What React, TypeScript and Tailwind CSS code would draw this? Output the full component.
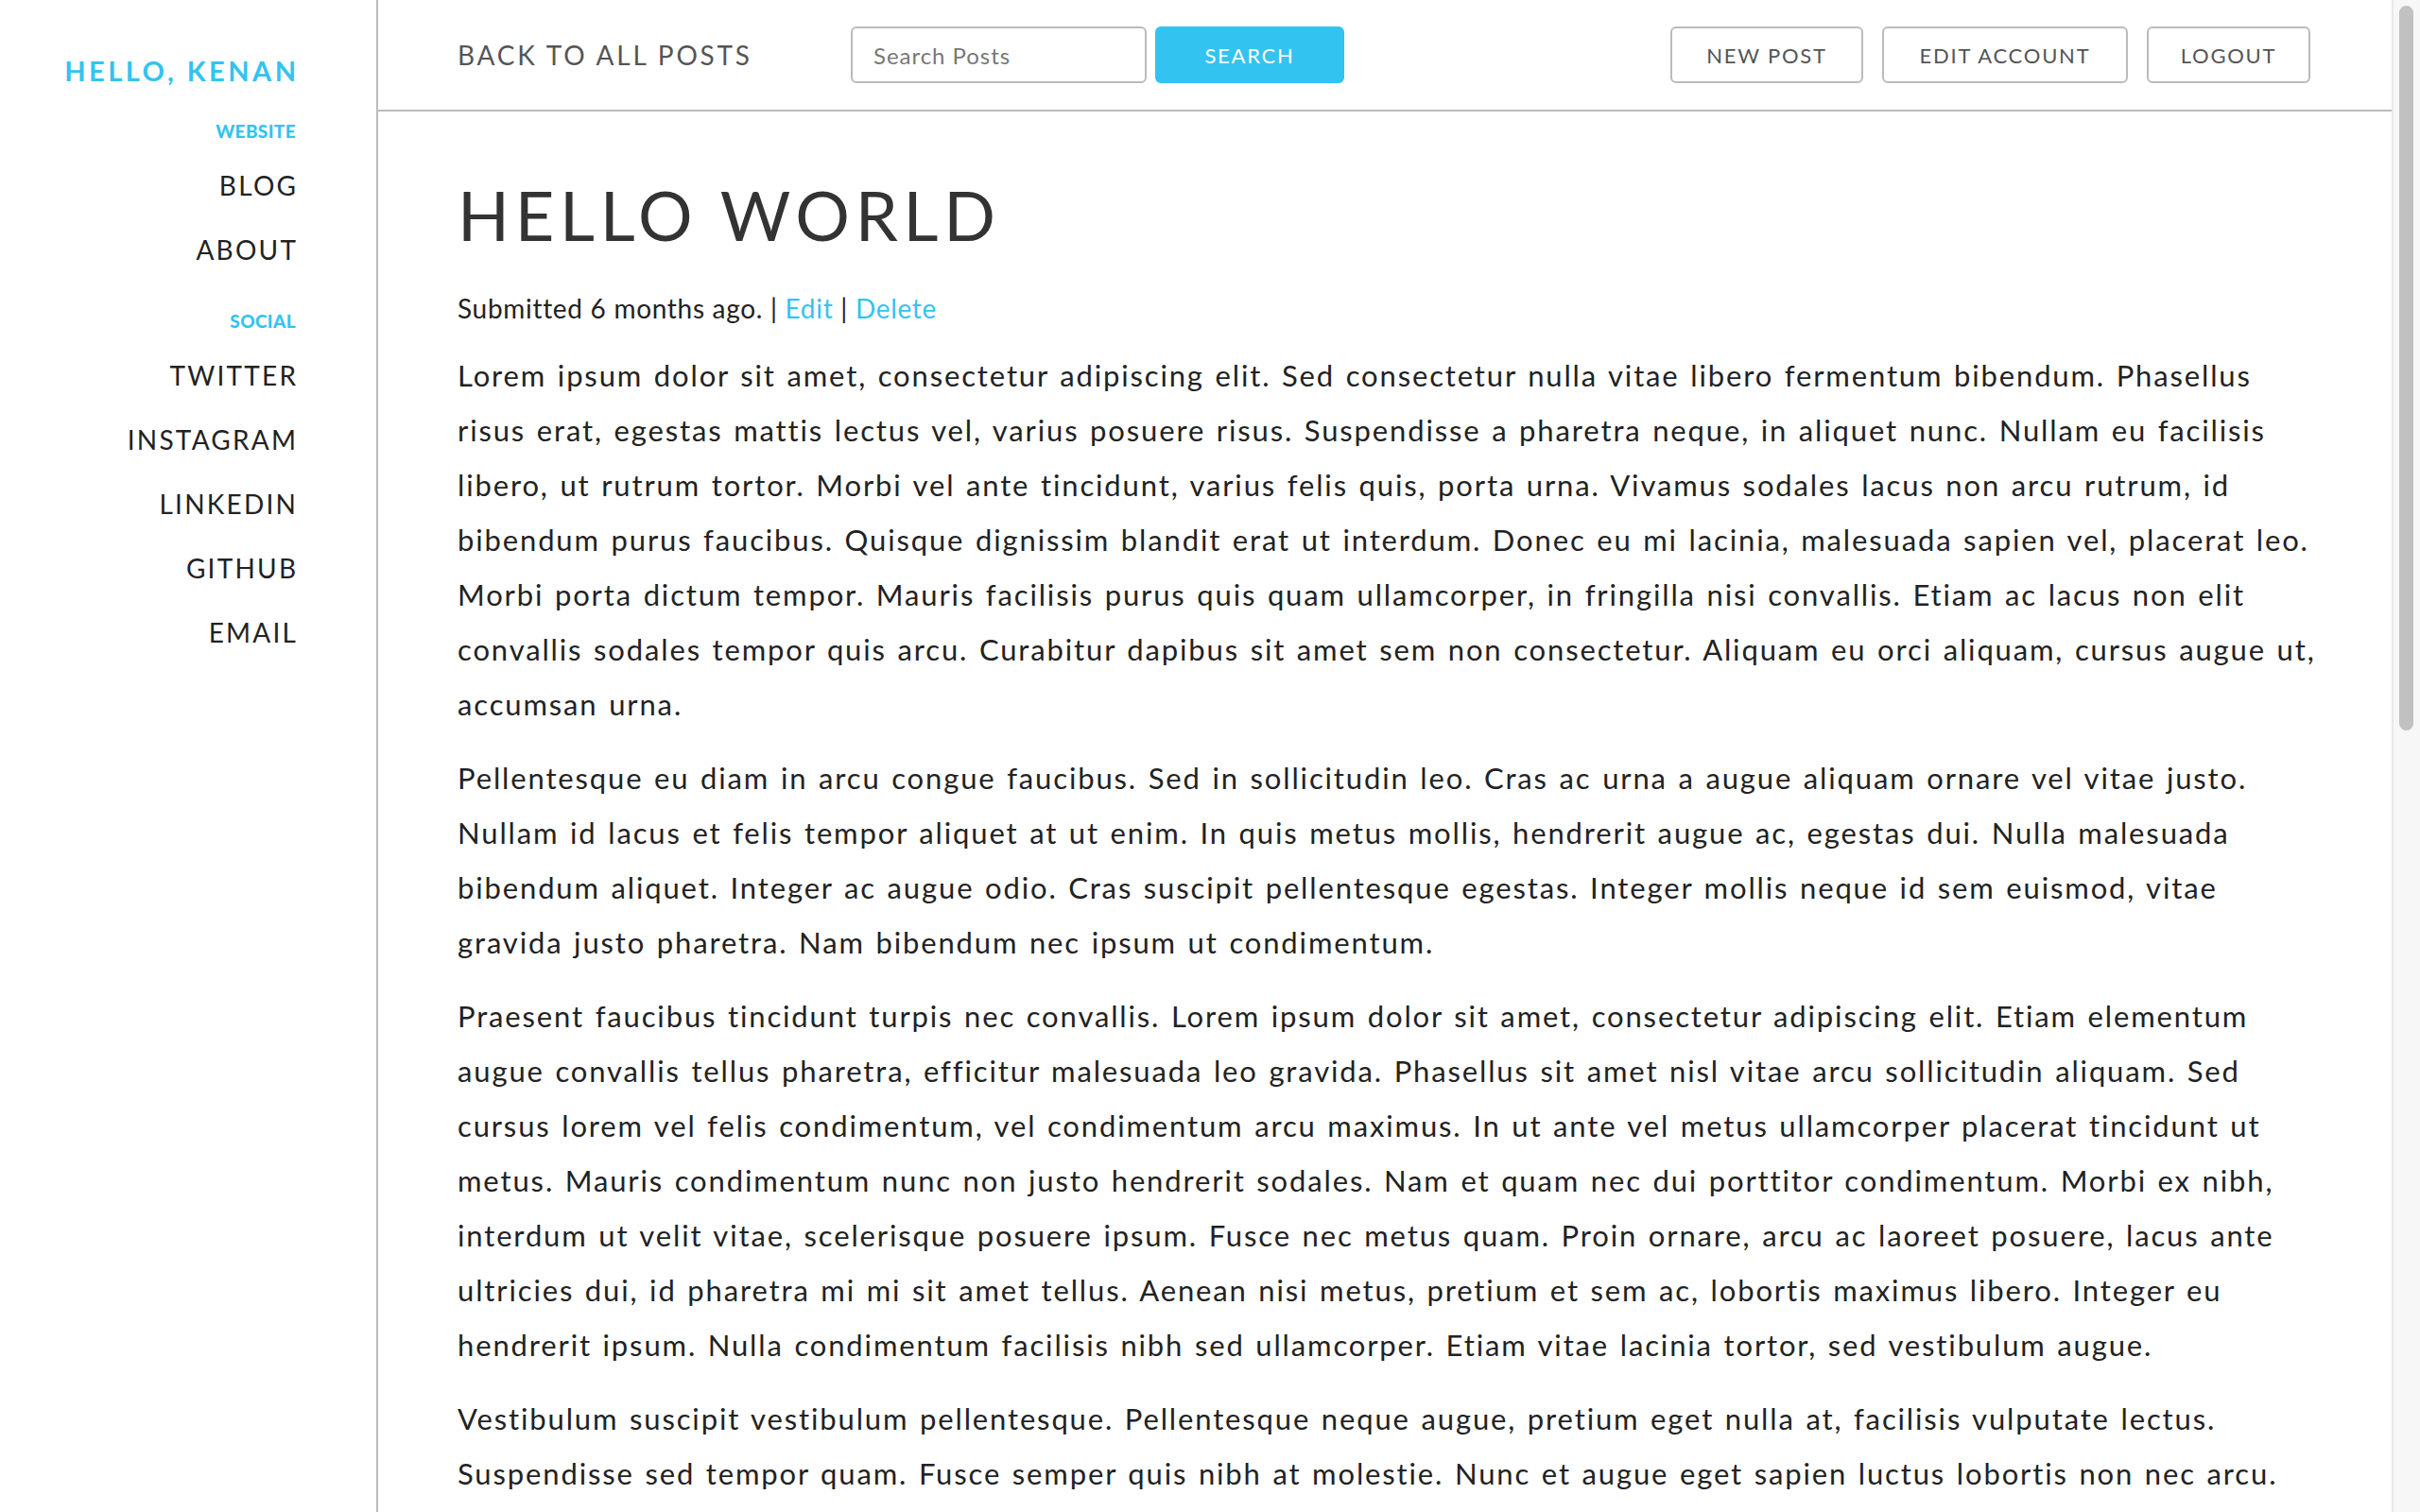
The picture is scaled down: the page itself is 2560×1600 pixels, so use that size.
import React from "react";

const paragraphs: string[][] = [
  [
    "Lorem ipsum dolor sit amet, consectetur adipiscing elit. Sed consectetur nulla vitae libero fermentum bibendum. Phasellus",
    "risus erat, egestas mattis lectus vel, varius posuere risus. Suspendisse a pharetra neque, in aliquet nunc. Nullam eu facilisis",
    "libero, ut rutrum tortor. Morbi vel ante tincidunt, varius felis quis, porta urna. Vivamus sodales lacus non arcu rutrum, id",
    "bibendum purus faucibus. Quisque dignissim blandit erat ut interdum. Donec eu mi lacinia, malesuada sapien vel, placerat leo.",
    "Morbi porta dictum tempor. Mauris facilisis purus quis quam ullamcorper, in fringilla nisi convallis. Etiam ac lacus non elit",
    "convallis sodales tempor quis arcu. Curabitur dapibus sit amet sem non consectetur. Aliquam eu orci aliquam, cursus augue ut,",
    "accumsan urna.",
  ],
  [
    "Pellentesque eu diam in arcu congue faucibus. Sed in sollicitudin leo. Cras ac urna a augue aliquam ornare vel vitae justo.",
    "Nullam id lacus et felis tempor aliquet at ut enim. In quis metus mollis, hendrerit augue ac, egestas dui. Nulla malesuada",
    "bibendum aliquet. Integer ac augue odio. Cras suscipit pellentesque egestas. Integer mollis neque id sem euismod, vitae",
    "gravida justo pharetra. Nam bibendum nec ipsum ut condimentum.",
  ],
  [
    "Praesent faucibus tincidunt turpis nec convallis. Lorem ipsum dolor sit amet, consectetur adipiscing elit. Etiam elementum",
    "augue convallis tellus pharetra, efficitur malesuada leo gravida. Phasellus sit amet nisl vitae arcu sollicitudin aliquam. Sed",
    "cursus lorem vel felis condimentum, vel condimentum arcu maximus. In ut ante vel metus ullamcorper placerat tincidunt ut",
    "metus. Mauris condimentum nunc non justo hendrerit sodales. Nam et quam nec dui porttitor condimentum. Morbi ex nibh,",
    "interdum ut velit vitae, scelerisque posuere ipsum. Fusce nec metus quam. Proin ornare, arcu ac laoreet posuere, lacus ante",
    "ultricies dui, id pharetra mi mi sit amet tellus. Aenean nisi metus, pretium et sem ac, lobortis maximus libero. Integer eu",
    "hendrerit ipsum. Nulla condimentum facilisis nibh sed ullamcorper. Etiam vitae lacinia tortor, sed vestibulum augue.",
  ],
  [
    "Vestibulum suscipit vestibulum pellentesque. Pellentesque neque augue, pretium eget nulla at, facilisis vulputate lectus.",
    "Suspendisse sed tempor quam. Fusce semper quis nibh at molestie. Nunc et augue eget sapien luctus lobortis non nec arcu.",
  ],
];

const websiteLinks = ["BLOG", "ABOUT"];
const socialLinks = ["TWITTER", "INSTAGRAM", "LINKEDIN", "GITHUB", "EMAIL"];

function NavLink({ label }: { label: string }) {
  return (
    <a
      href="#"
      className="block h-[68px] text-[28px] leading-[68px] tracking-[0.08em] mr-[-0.08em] text-[#222]"
    >
      {label}
    </a>
  );
}

export default function App() {
  return (
    <div className="flex h-screen overflow-hidden bg-white font-[Lato,sans-serif] text-[#222]">

      {/* Sidebar */}
      <aside className="w-[400px] shrink-0 border-r-2 border-[#bbb] pt-[55px] pr-[85px] text-right">

        <h2 className="text-[29px] font-bold leading-[40px] tracking-[0.12em] mr-[-0.12em] text-[#33c3f0]">
          HELLO, KENAN
        </h2>

        <nav className="mt-[29px]">

          <div className="mb-[8px] text-[19px] font-black leading-[30px] tracking-[0.02em] text-[#33c3f0]">
            WEBSITE
          </div>

          {websiteLinks.map((l) => (
            <NavLink key={l} label={l} />
          ))}

          <div className="mt-[27px] mb-[8px] text-[19px] font-black leading-[30px] tracking-[0.02em] text-[#33c3f0]">
            SOCIAL
          </div>

          {socialLinks.map((l) => (
            <NavLink key={l} label={l} />
          ))}

        </nav>

      </aside>

      {/* Main */}
      <main className="flex min-w-0 flex-1 flex-col">

        <header className="flex h-[118px] shrink-0 items-center border-b-2 border-[#bbb] pl-[84px] pr-[86px]">

          <a href="#" className="w-[416px] shrink-0 text-[28px] tracking-[0.1em] text-[#555]">
            BACK TO ALL POSTS
          </a>

          <input
            type="text"
            placeholder="Search Posts"
            className="h-[60px] w-[313px] rounded-[6px] border-2 border-[#bbb] px-[22px] text-[24px] tracking-[0.04em] text-[#555] outline-none placeholder:text-[#777]"
          />

          <button className="ml-[9px] h-[60px] w-[200px] rounded-[6px] bg-[#33c3f0] text-[22px] tracking-[0.08em] text-white">
            SEARCH
          </button>

          <div className="ml-auto flex gap-[20px]">
            <button className="h-[60px] w-[204px] rounded-[6px] border-2 border-[#bbb] text-[22px] tracking-[0.08em] text-[#555]">
              NEW POST
            </button>
            <button className="h-[60px] w-[260px] rounded-[6px] border-2 border-[#bbb] text-[22px] tracking-[0.08em] text-[#555]">
              EDIT ACCOUNT
            </button>
            <button className="h-[60px] w-[173px] rounded-[6px] border-2 border-[#bbb] text-[22px] tracking-[0.08em] text-[#555]">
              LOGOUT
            </button>
          </div>

        </header>

        <article className="min-h-0 flex-1 overflow-hidden pl-[84px] pr-[86px] pt-[66px]">

          <h1 className="text-[72px] font-normal leading-[1.2] tracking-[0.08em] text-[#333]">
            HELLO WORLD
          </h1>

          <p className="mt-[40px] text-[28px] leading-[1.2] tracking-[0.025em] text-[#222]">
            Submitted 6 months ago. |{" "}
            <a href="#" className="text-[#33c3f0]">Edit</a> |{" "}
            <a href="#" className="text-[#33c3f0]">Delete</a>
          </p>

          <div className="mt-[24px]">
            {paragraphs.map((lines, i) => (
              <p
                key={i}
                className="mb-[20px] whitespace-nowrap text-[31px] leading-[58px] tracking-[0.06em] [word-spacing:0.06em] text-[#222]"
              >
                {lines.map((line, j) => (
                  <span key={j} className="block">
                    {line}
                  </span>
                ))}
              </p>
            ))}
          </div>

        </article>

      </main>

      {/* Scrollbar */}
      <div className="w-[30px] shrink-0 border-l-2 border-[#e8e8e8] bg-[#f7f7f7] pl-[6px] pt-[6px]">
        <div className="h-[767px] w-[15px] rounded-full bg-[#c1c1c1]" />
      </div>

    </div>
  );
}
